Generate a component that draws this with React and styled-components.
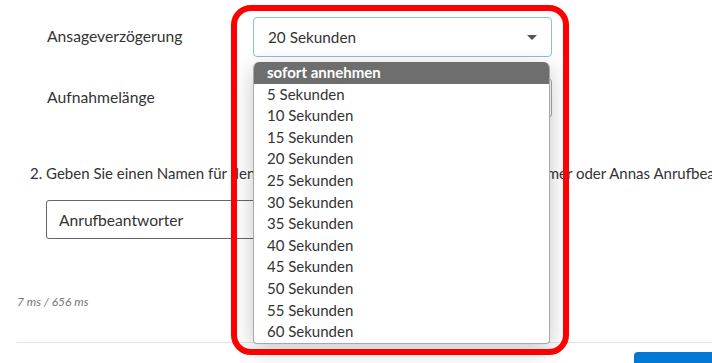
import React from 'react';
import styled, { createGlobalStyle } from 'styled-components';

const Global = createGlobalStyle`
  html, body { margin: 0; padding: 0; background: #fff; }
  body { font-family: Lato, "Noto Sans", sans-serif; color: #333; }
  * { box-sizing: border-box; }
`;

const Page = styled.div`
  position: relative;
  width: 712px;
  height: 363px;
  overflow: hidden;
  background: #fff;
  display: flex;
  flex-direction: column;
  padding-top: 17px;
  & > * { flex-shrink: 0; }
`;

const FieldRow = styled.div`
  display: grid;
  grid-template-columns: 206px 299px;
  align-items: center;
  padding-left: 47px;
  height: 40px;
  & + & { margin-top: 21px; }
`;

const Label = styled.div`
  font-size: 15.7px;
  color: #333;
  margin-top: -2px;
`;

const SelectCell = styled.div`
  position: relative;
  height: 40px;
`;

const SelectBox = styled.div`
  height: 40px;
  border: 1px solid ${p => (p.$focused ? '#8ebbe0' : '#a9a9a9')};
  border-radius: 4px;
  padding: 0 14px 0 14px;
  display: flex;
  align-items: center;
  justify-content: space-between;
  font-size: 15.3px;
  color: #333;
  background: #fff;
`;

const Caret = styled.span`
  width: 0;
  height: 0;
  border-left: 5px solid transparent;
  border-right: 5px solid transparent;
  border-top: 5px solid #555;
`;

const Menu = styled.ul`
  position: absolute;
  z-index: 2;
  left: 0;
  top: 45px;
  width: 297px;
  margin: 0;
  padding: 0;
  list-style: none;
  background: #fff;
  border: 1px solid #a8a8a8;
  border-top: none;
  border-radius: 6px 6px 4px 4px;
  overflow: hidden;
  box-shadow: 0 6px 22px rgba(0, 0, 0, 0.22);
`;

const Option = styled.li`
  height: 21.6px;
  line-height: 21.6px;
  padding-left: 13px;
  font-size: 15px;
  white-space: nowrap;
  color: ${p => (p.$active ? '#fff' : '#333')};
  background: ${p => (p.$active ? '#6e6e6e' : 'transparent')};
  font-weight: ${p => (p.$active ? 700 : 400)};
`;

const Instruction = styled.p`
  margin: 45px 0 0 0;
  padding-left: 30px;
  font-size: 15px;
  line-height: 20px;
  color: #333;
  white-space: nowrap;
`;

const TextInput = styled.div`
  margin: 17px 0 0 46px;
  width: 470px;
  height: 39px;
  border: 1px solid #666;
  border-radius: 3px;
  padding-left: 12px;
  display: flex;
  align-items: center;
  font-size: 15.6px;
  color: #333;
`;

const Timing = styled.div`
  margin: 55px 0 0 0;
  padding-left: 17px;
  font-size: 12px;
  line-height: 16px;
  font-style: italic;
  color: #777;
`;

const Divider = styled.div`
  margin: 32px 0 0 17px;
  height: 1px;
  background: #e4e4e4;
`;

const PrimaryButton = styled.div`
  margin: 9px 0 0 634px;
  width: 110px;
  height: 36px;
  background: #0078d4;
  border-radius: 4px;
`;

const Highlight = styled.div`
  position: absolute;
  z-index: 3;
  left: 231px;
  top: 5px;
  width: 338px;
  height: 350px;
  border: 6px solid #ff0000;
  border-radius: 20px;
  pointer-events: none;
`;

const options = [
  'sofort annehmen',
  '5 Sekunden',
  '10 Sekunden',
  '15 Sekunden',
  '20 Sekunden',
  '25 Sekunden',
  '30 Sekunden',
  '35 Sekunden',
  '40 Sekunden',
  '45 Sekunden',
  '50 Sekunden',
  '55 Sekunden',
  '60 Sekunden',
];

export default function App() {
  return (
    <>
      <Global />
      <Page>
        <FieldRow>
          <Label>Ansageverzögerung</Label>
          <SelectCell>
            <SelectBox $focused>
              <span>20 Sekunden</span>
              <Caret />
            </SelectBox>
            <Menu>
              {options.map((o, i) => (
                <Option key={o} $active={i === 0}>{o}</Option>
              ))}
            </Menu>
          </SelectCell>
        </FieldRow>
        <FieldRow>
          <Label>Aufnahmelänge</Label>
          <SelectCell>
            <SelectBox>
              <span>60 Sekunden</span>
              <Caret />
            </SelectBox>
          </SelectCell>
        </FieldRow>
        <Instruction>
          2. Geben Sie einen Namen für den Anrufbeantworter ein, zum Beispiel Rufnummer oder Annas Anrufbeantworter.
        </Instruction>
        <TextInput>Anrufbeantworter</TextInput>
        <Timing>7 ms / 656 ms</Timing>
        <Divider />
        <PrimaryButton />
        <Highlight />
      </Page>
    </>
  );
}
